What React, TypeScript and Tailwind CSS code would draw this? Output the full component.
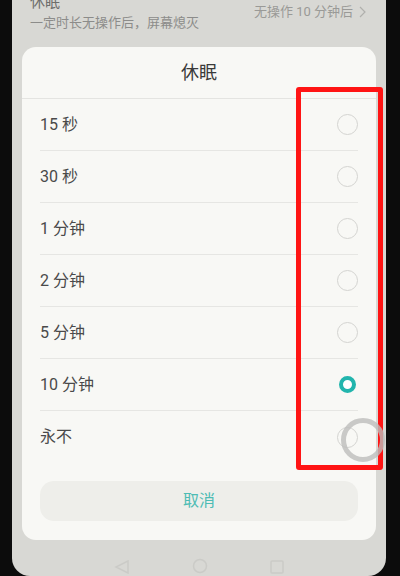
import React from 'react';

// sleep timeout options shown in the dialog
const options = ['15 秒', '30 秒', '1 分钟', '2 分钟', '5 分钟', '10 分钟', '永不'];
const selected = '10 分钟';

const Radio: React.FC<{ checked: boolean }> = ({ checked }) =>
  checked ? (
    <span className="block h-[17px] w-[17px] rounded-full border-[4px] border-[#22b5ad] bg-white" />
  ) : (
    <span className="block h-[21px] w-[21px] rounded-full border border-[#d4d4d1]" />
  );

const App: React.FC = () => {
  return (
    <div
      className="relative flex h-[576px] w-[400px] overflow-hidden bg-[#0c0c0c]"
      style={{ fontFamily: 'Roboto, "Noto Sans CJK SC", sans-serif' }}
    >
      {/* phone screen */}
      <div className="ml-[12px] mr-[14px] flex w-[374px] flex-col rounded-b-[18px] bg-[#d8d8d4]">
        {/* settings row behind the dialog */}
        <div className="relative h-[47px] px-[18px] text-[13px] text-[#8c8c8a]">
          <div className="absolute -top-[9px] left-[18px] text-[15px] text-[#6e6e6c]">休眠</div>
          <div className="absolute top-[13px] left-[18px]">一定时长无操作后，屏幕熄灭</div>
          <div className="absolute top-[2px] right-[20px] flex items-center gap-[6px] text-[#9a9a97]">
            <span>无操作 10 分钟后</span>
            <svg width="7" height="12" viewBox="0 0 7 12" fill="none" stroke="#b0b0ad" strokeWidth="1.2">
              <path d="M1 1l5 5-5 5" />
            </svg>
          </div>
        </div>

        {/* dialog */}
        <div className="mx-[10px] flex h-[493px] flex-col rounded-[14px] bg-[#f8f8f5]">
          <div className="flex h-[52px] items-center justify-center border-b border-[#e4e4e1] text-[18px] text-[#3a3a3a]">
            休眠
          </div>
          <div className="flex flex-col">
            {options.map((o, i) => (
              <div key={o} className="flex h-[52px] flex-col px-[18px]">
                <div className="flex flex-1 items-center justify-between">
                  <span className="text-[16px] text-[#4a4a4a]">{o}</span>
                  <span className="flex w-[21px] justify-center">
                    <Radio checked={o === selected} />
                  </span>
                </div>
                {i < options.length - 1 && <div className="h-px bg-[#e6e6e3]" />}
              </div>
            ))}
          </div>
          <div className="mx-[18px] mt-[18px] flex h-[40px] items-center justify-center rounded-[14px] bg-[#eeeeea] text-[16px] text-[#4dbcb4]">
            取消
          </div>
        </div>

        {/* navigation bar */}
        <div className="flex flex-1 items-end justify-center gap-[62px] pb-[2px] opacity-60">
          <svg width="16" height="14" viewBox="0 0 16 14" fill="none" stroke="#c4c4c0" strokeWidth="1.5">
            <path d="M14 1L2 7l12 6z" />
          </svg>
          <svg width="16" height="16" viewBox="0 0 16 16" fill="none" stroke="#c4c4c0" strokeWidth="1.5">
            <circle cx="8" cy="8" r="6.5" />
          </svg>
          <svg width="14" height="14" viewBox="0 0 14 14" fill="none" stroke="#c4c4c0" strokeWidth="1.5">
            <rect x="1" y="1" width="12" height="12" rx="1" />
          </svg>
        </div>
      </div>

      {/* red annotation box */}
      <div className="absolute top-[87px] left-[296px] h-[383px] w-[87px] rounded-[3px] border-[5px] border-[#ff1414]" />

      {/* touch indicator */}
      <div className="absolute top-[418px] left-[341px] h-[44px] w-[44px] rounded-full border-[5px] border-[#bdbdbb]/80" />
    </div>
  );
};

export default App;
